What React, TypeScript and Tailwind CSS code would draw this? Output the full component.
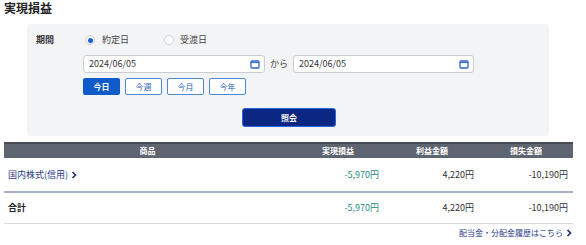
import React from "react";

const font = { fontFamily: '"Noto Sans CJK JP", "Noto Sans", sans-serif' };

function Cal() {
  return (
    <svg width="10" height="9" viewBox="0 0 10 9" className="shrink-0">
      <rect x="1" y="1" width="8" height="7" rx="1" fill="none" stroke="#2f63c8" strokeWidth="1.3" />
      <line x1="1" y1="2.6" x2="9" y2="2.6" stroke="#2f63c8" strokeWidth="1" />
    </svg>
  );
}

function Chevron() {
  return (
    <svg width="6" height="8" viewBox="0 0 6 8" className="inline-block ml-[3px]">
      <path d="M1.5 1 L4.5 4 L1.5 7" fill="none" stroke="#1f2a6b" strokeWidth="1.6" />
    </svg>
  );
}

export default function App() {
  return (
    <div className="w-[586px] h-[245px] bg-white text-[#222] overflow-hidden" style={font}>
      <div className="pl-[4px] pt-[1px] text-[12px] font-bold leading-[14px] text-[#222]">実現損益</div>
      <div className="ml-[27px] mt-[9px] w-[522px] h-[112px] bg-[#f3f4f6] rounded-[3px] pt-[10px]">
        <div className="flex items-center h-[12px]">
          <div className="w-[56px] pl-[9px] text-[9px] font-bold text-[#333]">期間</div>
          <div className="flex items-center">
            <span className="w-[10px] h-[10px] rounded-full border border-[#c8ccd4] bg-white flex items-center justify-center ml-[2px]">
              <span className="w-[5px] h-[5px] rounded-full bg-[#1e5fd0]" />
            </span>
            <span className="ml-[7px] text-[9px] text-[#444]">約定日</span>
            <span className="w-[10px] h-[10px] rounded-full border border-[#c8ccd4] bg-white ml-[35px]" />
            <span className="ml-[6px] text-[9px] text-[#444]">受渡日</span>
          </div>
        </div>
        <div className="flex items-center mt-[9px] pl-[56px]">
          <div className="w-[182px] h-[18px] bg-white border border-[#c9ccd2] rounded-[3px] flex items-center justify-between pl-[5px] pr-[4px]">
            <span className="text-[9px] text-[#333]">2024/06/05</span>
            <Cal />
          </div>
          <span className="mx-[5px] text-[9px] text-[#444]">から</span>
          <div className="w-[181px] h-[18px] bg-white border border-[#c9ccd2] rounded-[3px] flex items-center justify-between pl-[5px] pr-[4px]">
            <span className="text-[9px] text-[#333]">2024/06/05</span>
            <Cal />
          </div>
        </div>
        <div className="flex gap-[5px] mt-[5px] pl-[56px]">
          <button className="w-[37px] h-[17px] rounded-[2px] bg-[#0f5bc9] text-white text-[8px] font-bold leading-none">今日</button>
          <button className="w-[37px] h-[17px] rounded-[2px] bg-white border border-[#4f86d6] text-[#2a5fb8] text-[8px] leading-none">今週</button>
          <button className="w-[37px] h-[17px] rounded-[2px] bg-white border border-[#4f86d6] text-[#2a5fb8] text-[8px] leading-none">今月</button>
          <button className="w-[37px] h-[17px] rounded-[2px] bg-white border border-[#4f86d6] text-[#2a5fb8] text-[8px] leading-none">今年</button>
        </div>
        <div className="flex mt-[13px] pl-[215px]">
          <button className="w-[94px] h-[19px] rounded-[3px] bg-[#0c2684] border border-[#2c63e0] text-white text-[8px] font-bold leading-none">照会</button>
        </div>
      </div>
      <div className="mx-[4px] mt-[6px] w-[569px]">
        <div className="flex h-[16px] bg-[#5f6570] border-t-[2px] border-[#474c55] text-white text-[8px] font-bold items-center">
          <div className="w-[287px] text-center">商品</div>
          <div className="w-[94px] text-center">実現損益</div>
          <div className="w-[94px] text-center">利益金額</div>
          <div className="w-[94px] text-center">損失金額</div>
        </div>
        <div className="flex h-[35px] items-center border-b-[2px] border-[#a7b0c4] text-[9px]">
          <div className="w-[287px] pl-[4px] text-[#2b3a8a] flex items-center">国内株式(信用)<Chevron /></div>
          <div className="w-[88px] text-right text-[#2a8a82]">-5,970円</div>
          <div className="w-[95px] text-right text-[#333]">4,220円</div>
          <div className="w-[94px] text-right text-[#333]">-10,190円</div>
        </div>
        <div className="flex h-[31px] items-center border-b border-[#d7dbe0] text-[9px]">
          <div className="w-[287px] pl-[4px] font-bold text-[#222]">合計</div>
          <div className="w-[88px] text-right text-[#2a8a82]">-5,970円</div>
          <div className="w-[95px] text-right text-[#333]">4,220円</div>
          <div className="w-[94px] text-right text-[#333]">-10,190円</div>
        </div>
        <div className="flex justify-end items-center mt-[3px] pr-[1px] text-[8px] text-[#2b3a8a]">
          配当金・分配金履歴はこちら<Chevron />
        </div>
      </div>
    </div>
  );
}
